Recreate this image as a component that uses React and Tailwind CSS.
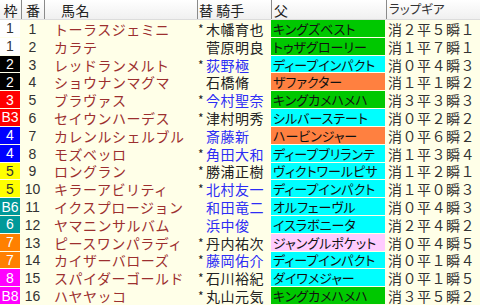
import React from 'react';

const FRAME = {
  1: 'bg-white text-[#333]',
  2: 'bg-black text-white',
  3: 'bg-[#ff0000] text-white',
  4: 'bg-[#0000ff] text-white',
  5: 'bg-[#ffff00] text-[#333]',
  6: 'bg-[#009999] text-white',
  7: 'bg-[#ff8000] text-white',
  8: 'bg-[#ff00ff] text-white',
};

const SIRE = {
  g: 'bg-[#00c800]',
  c: 'bg-[#00ffff]',
  o: 'bg-[#ff8040]',
  p: 'bg-[#ffccff]',
};

const rows = [
  { f: 1, fl: '1', no: 1, name: 'トーラスジェミニ', star: true, blue: false, jockey: '木幡育也', sire: 'キングズベスト', sc: 'g', lap: '消２平５瞬１' },
  { f: 1, fl: '1', no: 2, name: 'カラテ', star: false, blue: false, jockey: '菅原明良', sire: 'トゥザグローリー', sc: 'g', lap: '消１平７瞬１' },
  { f: 2, fl: '2', no: 3, name: 'レッドランメルト', star: true, blue: true, jockey: '荻野極', sire: 'ディープインパクト', sc: 'c', lap: '消０平４瞬３' },
  { f: 2, fl: '2', no: 4, name: 'ショウナンマグマ', star: false, blue: false, jockey: '石橋脩', sire: 'ザファクター', sc: 'o', lap: '消１平１瞬２' },
  { f: 3, fl: '3', no: 5, name: 'ブラヴァス', star: true, blue: true, jockey: '今村聖奈', sire: 'キングカメハメハ', sc: 'g', lap: '消３平３瞬３' },
  { f: 3, fl: 'B3', no: 6, name: 'セイウンハーデス', star: true, blue: false, jockey: '津村明秀', sire: 'シルバーステート', sc: 'c', lap: '消０平２瞬２' },
  { f: 4, fl: '4', no: 7, name: 'カレンルシェルブル', star: false, blue: true, jockey: '斎藤新', sire: 'ハービンジャー', sc: 'o', lap: '消０平６瞬２' },
  { f: 4, fl: '4', no: 8, name: 'モズベッロ', star: true, blue: true, jockey: '角田大和', sire: 'ディープブリランテ', sc: 'c', lap: '消１平３瞬４' },
  { f: 5, fl: '5', no: 9, name: 'ロングラン', star: true, blue: false, jockey: '勝浦正樹', sire: 'ヴィクトワールピサ', sc: 'c', lap: '消１平２瞬１' },
  { f: 5, fl: '5', no: 10, name: 'キラーアビリティ', star: true, blue: true, jockey: '北村友一', sire: 'ディープインパクト', sc: 'c', lap: '消１平０瞬３' },
  { f: 6, fl: 'B6', no: 11, name: 'イクスプロージョン', star: false, blue: true, jockey: '和田竜二', sire: 'オルフェーヴル', sc: 'c', lap: '消０平４瞬３' },
  { f: 6, fl: '6', no: 12, name: 'ヤマニンサルバム', star: false, blue: true, jockey: '浜中俊', sire: 'イスラボニータ', sc: 'c', lap: '消２平４瞬２' },
  { f: 7, fl: '7', no: 13, name: 'ピースワンパラディ', star: true, blue: false, jockey: '丹内祐次', sire: 'ジャングルポケット', sc: 'p', lap: '消０平４瞬５' },
  { f: 7, fl: '7', no: 14, name: 'カイザーバローズ', star: true, blue: true, jockey: '藤岡佑介', sire: 'ディープインパクト', sc: 'c', lap: '消０平１瞬４' },
  { f: 8, fl: '8', no: 15, name: 'スパイダーゴールド', star: true, blue: false, jockey: '石川裕紀', sire: 'ダイワメジャー', sc: 'c', lap: '消０平１瞬５' },
  { f: 8, fl: 'B8', no: 16, name: 'ハヤヤッコ', star: true, blue: false, jockey: '丸山元気', sire: 'キングカメハメハ', sc: 'g', lap: '消３平５瞬２' },
];

const cols = 'grid grid-cols-[21px_23px_153px_74px_115px_94px]';

export default function App() {
  return (
    <div className="w-[480px] h-[305px] overflow-hidden bg-[#ffffe8] font-['Noto_Sans_CJK_JP',sans-serif] text-[14px] leading-none">
      {/* header */}
      <div className={`${cols} h-[20px] bg-gradient-to-b from-white to-[#f0f0f0] border-b border-[#dcdcdc] text-[#222]`}>
        <div className="flex items-center justify-center">枠</div>
        <div className="flex items-center justify-center border-l border-[#8a8a8a]">番</div>
        <div className="flex items-center pl-[16px] border-l border-[#8a8a8a] tracking-[0.5px]">馬名</div>
        <div className="flex items-center pl-[1px] border-l border-[#8a8a8a] whitespace-pre">替 騎手</div>
        <div className="flex items-center pl-[2px] border-l border-[#8a8a8a]">父</div>
        <div className="flex items-center pl-[2px] border-l border-[#8a8a8a] text-[12.5px] text-[#333] [font-feature-settings:'palt']">ラップギア</div>
      </div>

      {/* rows */}
      <div className="grid grid-rows-[repeat(16,1fr)] h-[285px]">
        {rows.map((r) => (
          <div key={r.no} className={cols}>
            <div className={`${FRAME[r.f]} mr-px mb-px flex items-center justify-center font-['Liberation_Sans',sans-serif] text-[14px]`}>
              {r.fl}
            </div>
            <div className="flex items-center justify-center font-['Liberation_Sans',sans-serif] text-[14px] text-[#333]">
              {r.no}
            </div>
            <div className="flex items-center pl-[10px] text-[#9c2f2f] tracking-[0.5px] whitespace-nowrap">
              {r.name}
            </div>
            <div className={`flex items-center pl-[1px] whitespace-nowrap ${r.blue ? 'text-[#2d2df5]' : 'text-[#222]'}`}>
              <span className="w-[8px] text-[12px] text-[#222]">{r.star ? '*' : ''}</span>
              <span className="tracking-[0.5px]">{r.jockey}</span>
            </div>
            <div className={`${SIRE[r.sc]} mr-px mb-px flex items-center pl-[2px] text-[#111] text-[13px] whitespace-nowrap overflow-hidden [font-feature-settings:'palt']`}>
              {r.sire}
            </div>
            <div className="flex items-center pl-[2px] text-[#333] tracking-[0.5px] whitespace-nowrap">
              {r.lap}
            </div>
          </div>
        ))}
      </div>
    </div>
  );
}
